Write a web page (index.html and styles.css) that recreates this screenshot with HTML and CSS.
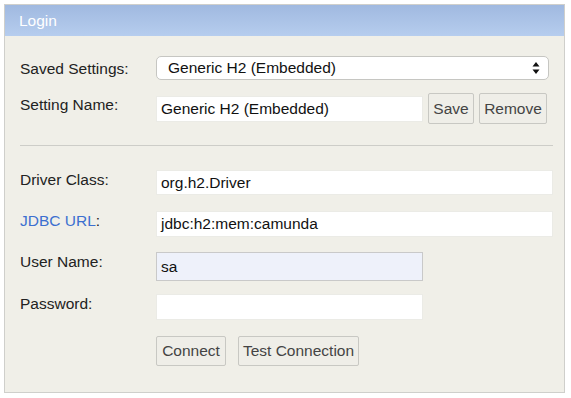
FILE: index.html
```html
<!DOCTYPE html>
<html>
<head>
<meta charset="utf-8">
<link rel="stylesheet" href="styles.css">
</head>
<body>
<div class="panel">
  <div class="header">Login</div>
  <div class="content">
    <div class="row r1">
      <span class="label">Saved Settings:</span>
      <div class="select">
        <span>Generic H2 (Embedded)</span>
        <svg class="arrows" width="8" height="14" viewBox="0 0 8 14"><path d="M4 1 L7.5 5.5 H0.5 Z M4 13 L7.5 8.5 H0.5 Z" fill="#111"/></svg>
      </div>
    </div>
    <div class="row r2">
      <span class="label top">Setting Name:</span>
      <div class="field short">Generic H2 (Embedded)</div>
      <div class="btn save">Save</div>
      <div class="btn remove">Remove</div>
    </div>
    <div class="sep"></div>
    <div class="row r3">
      <span class="label top">Driver Class:</span>
      <div class="field long">org.h2.Driver</div>
    </div>
    <div class="row r4">
      <span class="label top"><span class="link">JDBC URL</span>:</span>
      <div class="field long">jdbc:h2:mem:camunda</div>
    </div>
    <div class="row r5">
      <span class="label top">User Name:</span>
      <div class="field short focus">sa</div>
    </div>
    <div class="row r6">
      <span class="label top">Password:</span>
      <div class="field short"></div>
    </div>
    <div class="row r7">
      <span class="label"></span>
      <div class="btn connect">Connect</div>
      <div class="btn test">Test Connection</div>
    </div>
  </div>
</div>
</body>
</html>
```
FILE: styles.css
```css
html, body {
  margin: 0;
  padding: 0;
  background: #ffffff;
}
body {
  font-family: "Liberation Sans", Arial, sans-serif;
  font-size: 15.5px;
  color: #222;
}
.panel {
  margin: 4px 0 0 4px;
  width: 561px;
  height: 389px;
  border: 1px solid #cfcfcb;
  background: #f0efe8;
  box-sizing: border-box;
  display: flex;
  flex-direction: column;
}
.header {
  height: 31px;
  background: linear-gradient(#a0b9e0, #b6cdee);
  color: #ffffff;
  font-size: 15.5px;
  line-height: 31px;
  padding-left: 14px;
  flex: none;
}
.content {
  padding: 0 0 0 15px;
  display: flex;
  flex-direction: column;
}
.row {
  display: flex;
  align-items: center;
}
.label {
  width: 136px;
  flex: none;
  line-height: 17px;
}
.label.top {
  align-self: flex-start;
  padding-top: 1px;
}
.r2 .label.top { padding-top: 3px; }
.link { color: #3c6fd0; }
.r1 { margin-top: 20px; height: 24px; }
.r2 { margin-top: 13px; height: 31px; }
.r3 { margin-top: 24px; height: 25px; }
.r4 { margin-top: 16px; height: 26px; }
.r5 { margin-top: 15px; height: 29px; }
.r6 { margin-top: 13px; height: 26px; }
.r7 { margin-top: 16px; height: 30px; }
.sep {
  margin-top: 21px;
  height: 1px;
  width: 533px;
  background: #cdcdc8;
}
.select {
  width: 393px;
  height: 24px;
  box-sizing: border-box;
  border: 1px solid #c6c6c2;
  border-radius: 5px;
  background: #ffffff;
  display: flex;
  align-items: center;
  justify-content: space-between;
  padding: 0 8px 0 11px;
  color: #111;
}
.arrows { display: block; }
.field {
  height: 26px;
  box-sizing: border-box;
  background: #ffffff;
  border: 1px solid #ebebe6;
  padding: 0 4px;
  line-height: 24px;
  color: #111;
}
.short { width: 267px; }
.long { width: 397px; }
.r3 .field { height: 25px; line-height: 23px; }
.field.focus {
  height: 29px;
  line-height: 27px;
  background: #eef1fa;
  border: 1px solid #c9c9c9;
}
.btn {
  box-sizing: border-box;
  height: 31px;
  line-height: 29px;
  border: 1px solid #c8c8c3;
  border-radius: 2px;
  background: #efeee8;
  color: #444;
  text-align: center;
}
.save { width: 46px; margin-left: 5px; }
.remove { width: 68px; margin-left: 5px; }
.connect { width: 70px; height: 30px; line-height: 28px; }
.test { width: 121px; height: 30px; line-height: 28px; margin-left: 12px; }
```
